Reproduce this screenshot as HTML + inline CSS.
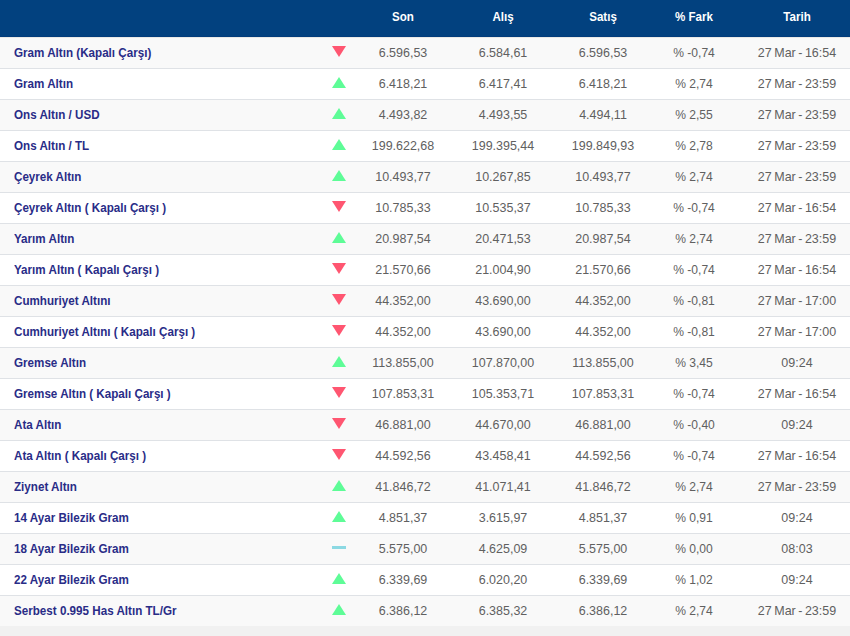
<!DOCTYPE html>
<html><head><meta charset="utf-8"><style>
html,body{margin:0;padding:0;}
body{width:850px;height:636px;background:#f1f1f1;position:relative;overflow:hidden;font-family:"Liberation Sans",sans-serif;}
.hd{position:absolute;left:0;top:0;width:850px;height:36px;background:#02417f;border-bottom:1px solid #023c7b;}
.hd div{position:absolute;top:9px;transform:scaleX(0.89);height:16px;line-height:16px;width:120px;text-align:center;color:#fff;font-weight:bold;font-size:13px;letter-spacing:0px;}
.r{position:absolute;left:0;width:850px;}
.o{background:#f9f9f9;}
.e{background:#fff;}
.b{border-bottom:1px solid #dfe2e6;}
.n{position:absolute;left:14px;transform:scaleX(0.895);transform-origin:0 0;height:16px;line-height:16px;color:#292c87;font-weight:bold;font-size:13px;letter-spacing:0px;white-space:nowrap;}
.c{position:absolute;height:16px;line-height:16px;width:120px;text-align:center;color:#606060;font-size:13px;letter-spacing:0px;white-space:nowrap;}
.ic{position:absolute;left:332px;}
.up{width:0;height:0;border-left:7px solid transparent;border-right:7px solid transparent;border-bottom:11px solid #5efc97;}
.dn{width:0;height:0;border-left:7px solid transparent;border-right:7px solid transparent;border-top:11px solid #ff5671;}
.c0,.c1,.c2{transform:scaleX(0.96);}
.c3{transform:scaleX(0.93);word-spacing:0px;}
.c4{transform:scaleX(0.96);word-spacing:-1px;}
.ds{width:14px;height:3px;background:#8cd9e3;}
</style></head><body>

<div class="hd">
<div style="left:343.0px">Son</div>
<div style="left:442.5px">Alış</div>
<div style="left:542.5px">Satış</div>
<div style="left:633.5px">% Fark</div>
<div style="left:736.5px">Tarih</div>
</div>
<div class="r o b" style="top:37px;height:31px">
<div class="n" style="top:8px">Gram Altın (Kapalı Çarşı)</div>
<div class="ic dn" style="top:9px"></div>
<div class="c c0" style="left:343.0px;top:8px">6.596,53</div>
<div class="c c1" style="left:442.5px;top:8px">6.584,61</div>
<div class="c c2" style="left:542.5px;top:8px">6.596,53</div>
<div class="c c3" style="left:633.5px;top:8px">% -0,74</div>
<div class="c c4" style="left:736.5px;top:8px">27 Mar - 16:54</div>
</div>
<div class="r e b" style="top:69px;height:30px">
<div class="n" style="top:7px">Gram Altın</div>
<div class="ic up" style="top:8px"></div>
<div class="c c0" style="left:343.0px;top:7px">6.418,21</div>
<div class="c c1" style="left:442.5px;top:7px">6.417,41</div>
<div class="c c2" style="left:542.5px;top:7px">6.418,21</div>
<div class="c c3" style="left:633.5px;top:7px">% 2,74</div>
<div class="c c4" style="left:736.5px;top:7px">27 Mar - 23:59</div>
</div>
<div class="r o b" style="top:100px;height:30px">
<div class="n" style="top:7px">Ons Altın / USD</div>
<div class="ic up" style="top:8px"></div>
<div class="c c0" style="left:343.0px;top:7px">4.493,82</div>
<div class="c c1" style="left:442.5px;top:7px">4.493,55</div>
<div class="c c2" style="left:542.5px;top:7px">4.494,11</div>
<div class="c c3" style="left:633.5px;top:7px">% 2,55</div>
<div class="c c4" style="left:736.5px;top:7px">27 Mar - 23:59</div>
</div>
<div class="r e b" style="top:131px;height:30px">
<div class="n" style="top:7px">Ons Altın / TL</div>
<div class="ic up" style="top:8px"></div>
<div class="c c0" style="left:343.0px;top:7px">199.622,68</div>
<div class="c c1" style="left:442.5px;top:7px">199.395,44</div>
<div class="c c2" style="left:542.5px;top:7px">199.849,93</div>
<div class="c c3" style="left:633.5px;top:7px">% 2,78</div>
<div class="c c4" style="left:736.5px;top:7px">27 Mar - 23:59</div>
</div>
<div class="r o b" style="top:162px;height:30px">
<div class="n" style="top:7px">Çeyrek Altın</div>
<div class="ic up" style="top:8px"></div>
<div class="c c0" style="left:343.0px;top:7px">10.493,77</div>
<div class="c c1" style="left:442.5px;top:7px">10.267,85</div>
<div class="c c2" style="left:542.5px;top:7px">10.493,77</div>
<div class="c c3" style="left:633.5px;top:7px">% 2,74</div>
<div class="c c4" style="left:736.5px;top:7px">27 Mar - 23:59</div>
</div>
<div class="r e b" style="top:193px;height:30px">
<div class="n" style="top:7px">Çeyrek Altın ( Kapalı Çarşı )</div>
<div class="ic dn" style="top:8px"></div>
<div class="c c0" style="left:343.0px;top:7px">10.785,33</div>
<div class="c c1" style="left:442.5px;top:7px">10.535,37</div>
<div class="c c2" style="left:542.5px;top:7px">10.785,33</div>
<div class="c c3" style="left:633.5px;top:7px">% -0,74</div>
<div class="c c4" style="left:736.5px;top:7px">27 Mar - 16:54</div>
</div>
<div class="r o b" style="top:224px;height:30px">
<div class="n" style="top:7px">Yarım Altın</div>
<div class="ic up" style="top:8px"></div>
<div class="c c0" style="left:343.0px;top:7px">20.987,54</div>
<div class="c c1" style="left:442.5px;top:7px">20.471,53</div>
<div class="c c2" style="left:542.5px;top:7px">20.987,54</div>
<div class="c c3" style="left:633.5px;top:7px">% 2,74</div>
<div class="c c4" style="left:736.5px;top:7px">27 Mar - 23:59</div>
</div>
<div class="r e b" style="top:255px;height:30px">
<div class="n" style="top:7px">Yarım Altın ( Kapalı Çarşı )</div>
<div class="ic dn" style="top:8px"></div>
<div class="c c0" style="left:343.0px;top:7px">21.570,66</div>
<div class="c c1" style="left:442.5px;top:7px">21.004,90</div>
<div class="c c2" style="left:542.5px;top:7px">21.570,66</div>
<div class="c c3" style="left:633.5px;top:7px">% -0,74</div>
<div class="c c4" style="left:736.5px;top:7px">27 Mar - 16:54</div>
</div>
<div class="r o b" style="top:286px;height:30px">
<div class="n" style="top:7px">Cumhuriyet Altını</div>
<div class="ic dn" style="top:8px"></div>
<div class="c c0" style="left:343.0px;top:7px">44.352,00</div>
<div class="c c1" style="left:442.5px;top:7px">43.690,00</div>
<div class="c c2" style="left:542.5px;top:7px">44.352,00</div>
<div class="c c3" style="left:633.5px;top:7px">% -0,81</div>
<div class="c c4" style="left:736.5px;top:7px">27 Mar - 17:00</div>
</div>
<div class="r e b" style="top:317px;height:30px">
<div class="n" style="top:7px">Cumhuriyet Altını ( Kapalı Çarşı )</div>
<div class="ic dn" style="top:8px"></div>
<div class="c c0" style="left:343.0px;top:7px">44.352,00</div>
<div class="c c1" style="left:442.5px;top:7px">43.690,00</div>
<div class="c c2" style="left:542.5px;top:7px">44.352,00</div>
<div class="c c3" style="left:633.5px;top:7px">% -0,81</div>
<div class="c c4" style="left:736.5px;top:7px">27 Mar - 17:00</div>
</div>
<div class="r o b" style="top:348px;height:30px">
<div class="n" style="top:7px">Gremse Altın</div>
<div class="ic up" style="top:8px"></div>
<div class="c c0" style="left:343.0px;top:7px">113.855,00</div>
<div class="c c1" style="left:442.5px;top:7px">107.870,00</div>
<div class="c c2" style="left:542.5px;top:7px">113.855,00</div>
<div class="c c3" style="left:633.5px;top:7px">% 3,45</div>
<div class="c c4" style="left:736.5px;top:7px">09:24</div>
</div>
<div class="r e b" style="top:379px;height:30px">
<div class="n" style="top:7px">Gremse Altın ( Kapalı Çarşı )</div>
<div class="ic dn" style="top:8px"></div>
<div class="c c0" style="left:343.0px;top:7px">107.853,31</div>
<div class="c c1" style="left:442.5px;top:7px">105.353,71</div>
<div class="c c2" style="left:542.5px;top:7px">107.853,31</div>
<div class="c c3" style="left:633.5px;top:7px">% -0,74</div>
<div class="c c4" style="left:736.5px;top:7px">27 Mar - 16:54</div>
</div>
<div class="r o b" style="top:410px;height:30px">
<div class="n" style="top:7px">Ata Altın</div>
<div class="ic dn" style="top:8px"></div>
<div class="c c0" style="left:343.0px;top:7px">46.881,00</div>
<div class="c c1" style="left:442.5px;top:7px">44.670,00</div>
<div class="c c2" style="left:542.5px;top:7px">46.881,00</div>
<div class="c c3" style="left:633.5px;top:7px">% -0,40</div>
<div class="c c4" style="left:736.5px;top:7px">09:24</div>
</div>
<div class="r e b" style="top:441px;height:30px">
<div class="n" style="top:7px">Ata Altın ( Kapalı Çarşı )</div>
<div class="ic dn" style="top:8px"></div>
<div class="c c0" style="left:343.0px;top:7px">44.592,56</div>
<div class="c c1" style="left:442.5px;top:7px">43.458,41</div>
<div class="c c2" style="left:542.5px;top:7px">44.592,56</div>
<div class="c c3" style="left:633.5px;top:7px">% -0,74</div>
<div class="c c4" style="left:736.5px;top:7px">27 Mar - 16:54</div>
</div>
<div class="r o b" style="top:472px;height:30px">
<div class="n" style="top:7px">Ziynet Altın</div>
<div class="ic up" style="top:8px"></div>
<div class="c c0" style="left:343.0px;top:7px">41.846,72</div>
<div class="c c1" style="left:442.5px;top:7px">41.071,41</div>
<div class="c c2" style="left:542.5px;top:7px">41.846,72</div>
<div class="c c3" style="left:633.5px;top:7px">% 2,74</div>
<div class="c c4" style="left:736.5px;top:7px">27 Mar - 23:59</div>
</div>
<div class="r e b" style="top:503px;height:30px">
<div class="n" style="top:7px">14 Ayar Bilezik Gram</div>
<div class="ic up" style="top:8px"></div>
<div class="c c0" style="left:343.0px;top:7px">4.851,37</div>
<div class="c c1" style="left:442.5px;top:7px">3.615,97</div>
<div class="c c2" style="left:542.5px;top:7px">4.851,37</div>
<div class="c c3" style="left:633.5px;top:7px">% 0,91</div>
<div class="c c4" style="left:736.5px;top:7px">09:24</div>
</div>
<div class="r o b" style="top:534px;height:30px">
<div class="n" style="top:7px">18 Ayar Bilezik Gram</div>
<div class="ic ds" style="top:12px"></div>
<div class="c c0" style="left:343.0px;top:7px">5.575,00</div>
<div class="c c1" style="left:442.5px;top:7px">4.625,09</div>
<div class="c c2" style="left:542.5px;top:7px">5.575,00</div>
<div class="c c3" style="left:633.5px;top:7px">% 0,00</div>
<div class="c c4" style="left:736.5px;top:7px">08:03</div>
</div>
<div class="r e b" style="top:565px;height:30px">
<div class="n" style="top:7px">22 Ayar Bilezik Gram</div>
<div class="ic up" style="top:8px"></div>
<div class="c c0" style="left:343.0px;top:7px">6.339,69</div>
<div class="c c1" style="left:442.5px;top:7px">6.020,20</div>
<div class="c c2" style="left:542.5px;top:7px">6.339,69</div>
<div class="c c3" style="left:633.5px;top:7px">% 1,02</div>
<div class="c c4" style="left:736.5px;top:7px">09:24</div>
</div>
<div class="r o" style="top:596px;height:30px">
<div class="n" style="top:7px">Serbest 0.995 Has Altın TL/Gr</div>
<div class="ic up" style="top:8px"></div>
<div class="c c0" style="left:343.0px;top:7px">6.386,12</div>
<div class="c c1" style="left:442.5px;top:7px">6.385,32</div>
<div class="c c2" style="left:542.5px;top:7px">6.386,12</div>
<div class="c c3" style="left:633.5px;top:7px">% 2,74</div>
<div class="c c4" style="left:736.5px;top:7px">27 Mar - 23:59</div>
</div>
<div style="position:absolute;left:0;top:37px;width:850px;height:1px;background:#e9e9e6"></div>
</body></html>
